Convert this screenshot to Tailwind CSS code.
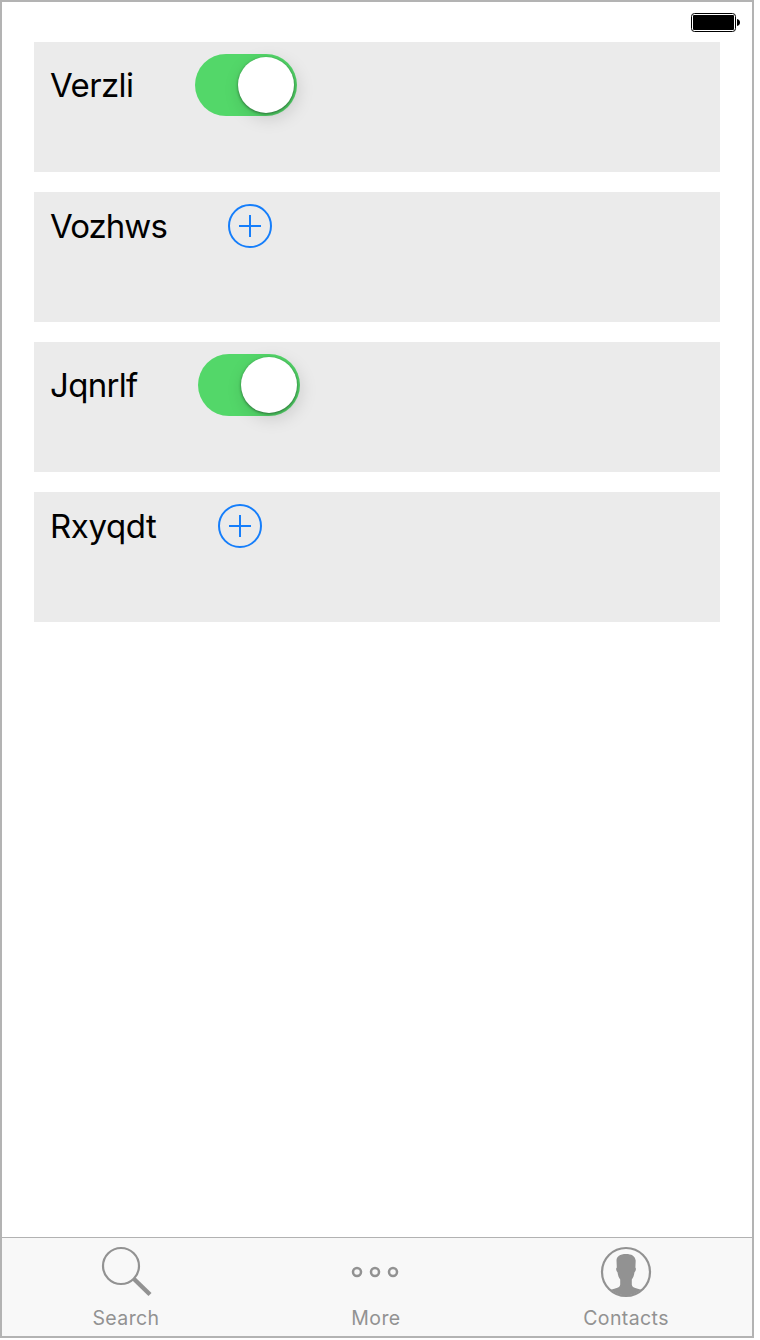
<!DOCTYPE html>
<html lang="en">
<head>
<meta charset="utf-8">
<title>Controls</title>
<script src="https://cdn.jsdelivr.net/npm/@tailwindcss/browser@4"></script>
</head>
<body class="bg-white font-['Inter','Liberation_Sans',sans-serif] text-black">
<div class="flex h-[1338px] w-[754px] flex-col border-2 border-[#b3b3b3] bg-white">
  <header class="flex h-10 shrink-0 justify-end pt-[10px] pr-3">
    <svg class="h-5 w-[50px]" viewBox="0 0 50 20">
      <rect x="1.5" y="1.5" width="44" height="18" rx="3" fill="#fff" stroke="#000"/>
      <rect x="3" y="3" width="41" height="15" rx="1" fill="#000"/>
      <path d="M47 7q3 .8 3 3.5t-3 3.5z" fill="#000"/>
    </svg>
  </header>
  <main class="flex grow flex-col gap-5 pr-8 pl-8">
    <section class="flex h-[130px] items-start bg-[#ebebeb] pt-3 pl-4">
      <span class="w-[145px] text-[33px] leading-[62px] tracking-[-0.6px]">Verzli</span>
      <div class="flex h-[62px] w-[102px] items-center justify-end rounded-full bg-[#53d769] pr-[3px]">
        <div class="size-14 rounded-full bg-white shadow-[0_1px_3px_rgba(0,0,0,0.45),3px_5px_18px_rgba(0,0,0,0.15)]"></div>
      </div>
    </section>
    <section class="flex h-[130px] items-start bg-[#ebebeb] pt-3 pl-4">
      <span class="w-[178px] text-[33px] leading-[44px] tracking-[-0.95px]">Vozhws</span>
      <svg class="size-11" viewBox="0 0 44 44" fill="none" stroke="#157efb" stroke-width="2"><circle cx="22" cy="22" r="21"/><path d="M11 22h22M22 11v22"/></svg>
    </section>
    <section class="flex h-[130px] items-start bg-[#ebebeb] pt-3 pl-4">
      <span class="w-[148px] text-[33px] leading-[62px] tracking-[-0.7px]">Jqnrlf</span>
      <div class="flex h-[62px] w-[102px] items-center justify-end rounded-full bg-[#53d769] pr-[3px]">
        <div class="size-14 rounded-full bg-white shadow-[0_1px_3px_rgba(0,0,0,0.45),3px_5px_18px_rgba(0,0,0,0.15)]"></div>
      </div>
    </section>
    <section class="flex h-[130px] items-start bg-[#ebebeb] pt-3 pl-4">
      <span class="w-[168px] text-[33px] leading-[44px] tracking-[-0.4px]">Rxyqdt</span>
      <svg class="size-11" viewBox="0 0 44 44" fill="none" stroke="#157efb" stroke-width="2"><circle cx="22" cy="22" r="21"/><path d="M11 22h22M22 11v22"/></svg>
    </section>
  </main>
  <nav class="grid h-[99px] shrink-0 grid-cols-[248px_252px_248px] border-t border-[#b2b2b2] bg-[#f8f8f8] text-[19.5px] leading-6 text-[#929292]">
    <div class="flex flex-col items-center pt-2">
      <svg class="size-[52px]" viewBox="0 0 52 52" fill="none" stroke="#929292"><circle cx="21" cy="20" r="18" stroke-width="2.2"/><path d="M34 33L50 48.500" stroke-width="4.400"/></svg>
      <span class="mt-2 tracking-[0.4px]">Search</span>
    </div>
    <div class="flex flex-col items-center pt-2">
      <svg class="size-[52px]" viewBox="0 0 52 52" fill="none" stroke="#929292" stroke-width="2.500"><circle cx="7" cy="26" r="4"/><circle cx="25" cy="26" r="4"/><circle cx="43" cy="26" r="4"/></svg>
      <span class="mt-2 tracking-[0.4px]">More</span>
    </div>
    <div class="flex flex-col items-center pt-2">
      <svg class="size-[52px]" viewBox="0 0 52 52"><circle cx="26" cy="26" r="24" fill="none" stroke="#929292" stroke-width="2.2"/><path d="M26 8c-6 0-9.500 2.500-9.500 6.500l.3 7c-1.200 1-.8 3 .7 4.800.5 3.500 1.300 5.500 2.700 7.200v5c0 3-4.500 3.900-9.500 5.300A24 24 0 0 0 41.300 43.800c-5-1.400-9.500-2.300-9.500-5.300v-5c1.400-1.700 2.200-3.700 2.700-7.200 1.500-1.800 1.900-3.800.9-4.800l.3-7c-.7-4.500-4.200-6.500-9.700-6.500z" fill="#929292"/></svg>
      <span class="mt-2 tracking-[0.4px]">Contacts</span>
    </div>
  </nav>
</div>
</body>
</html>
